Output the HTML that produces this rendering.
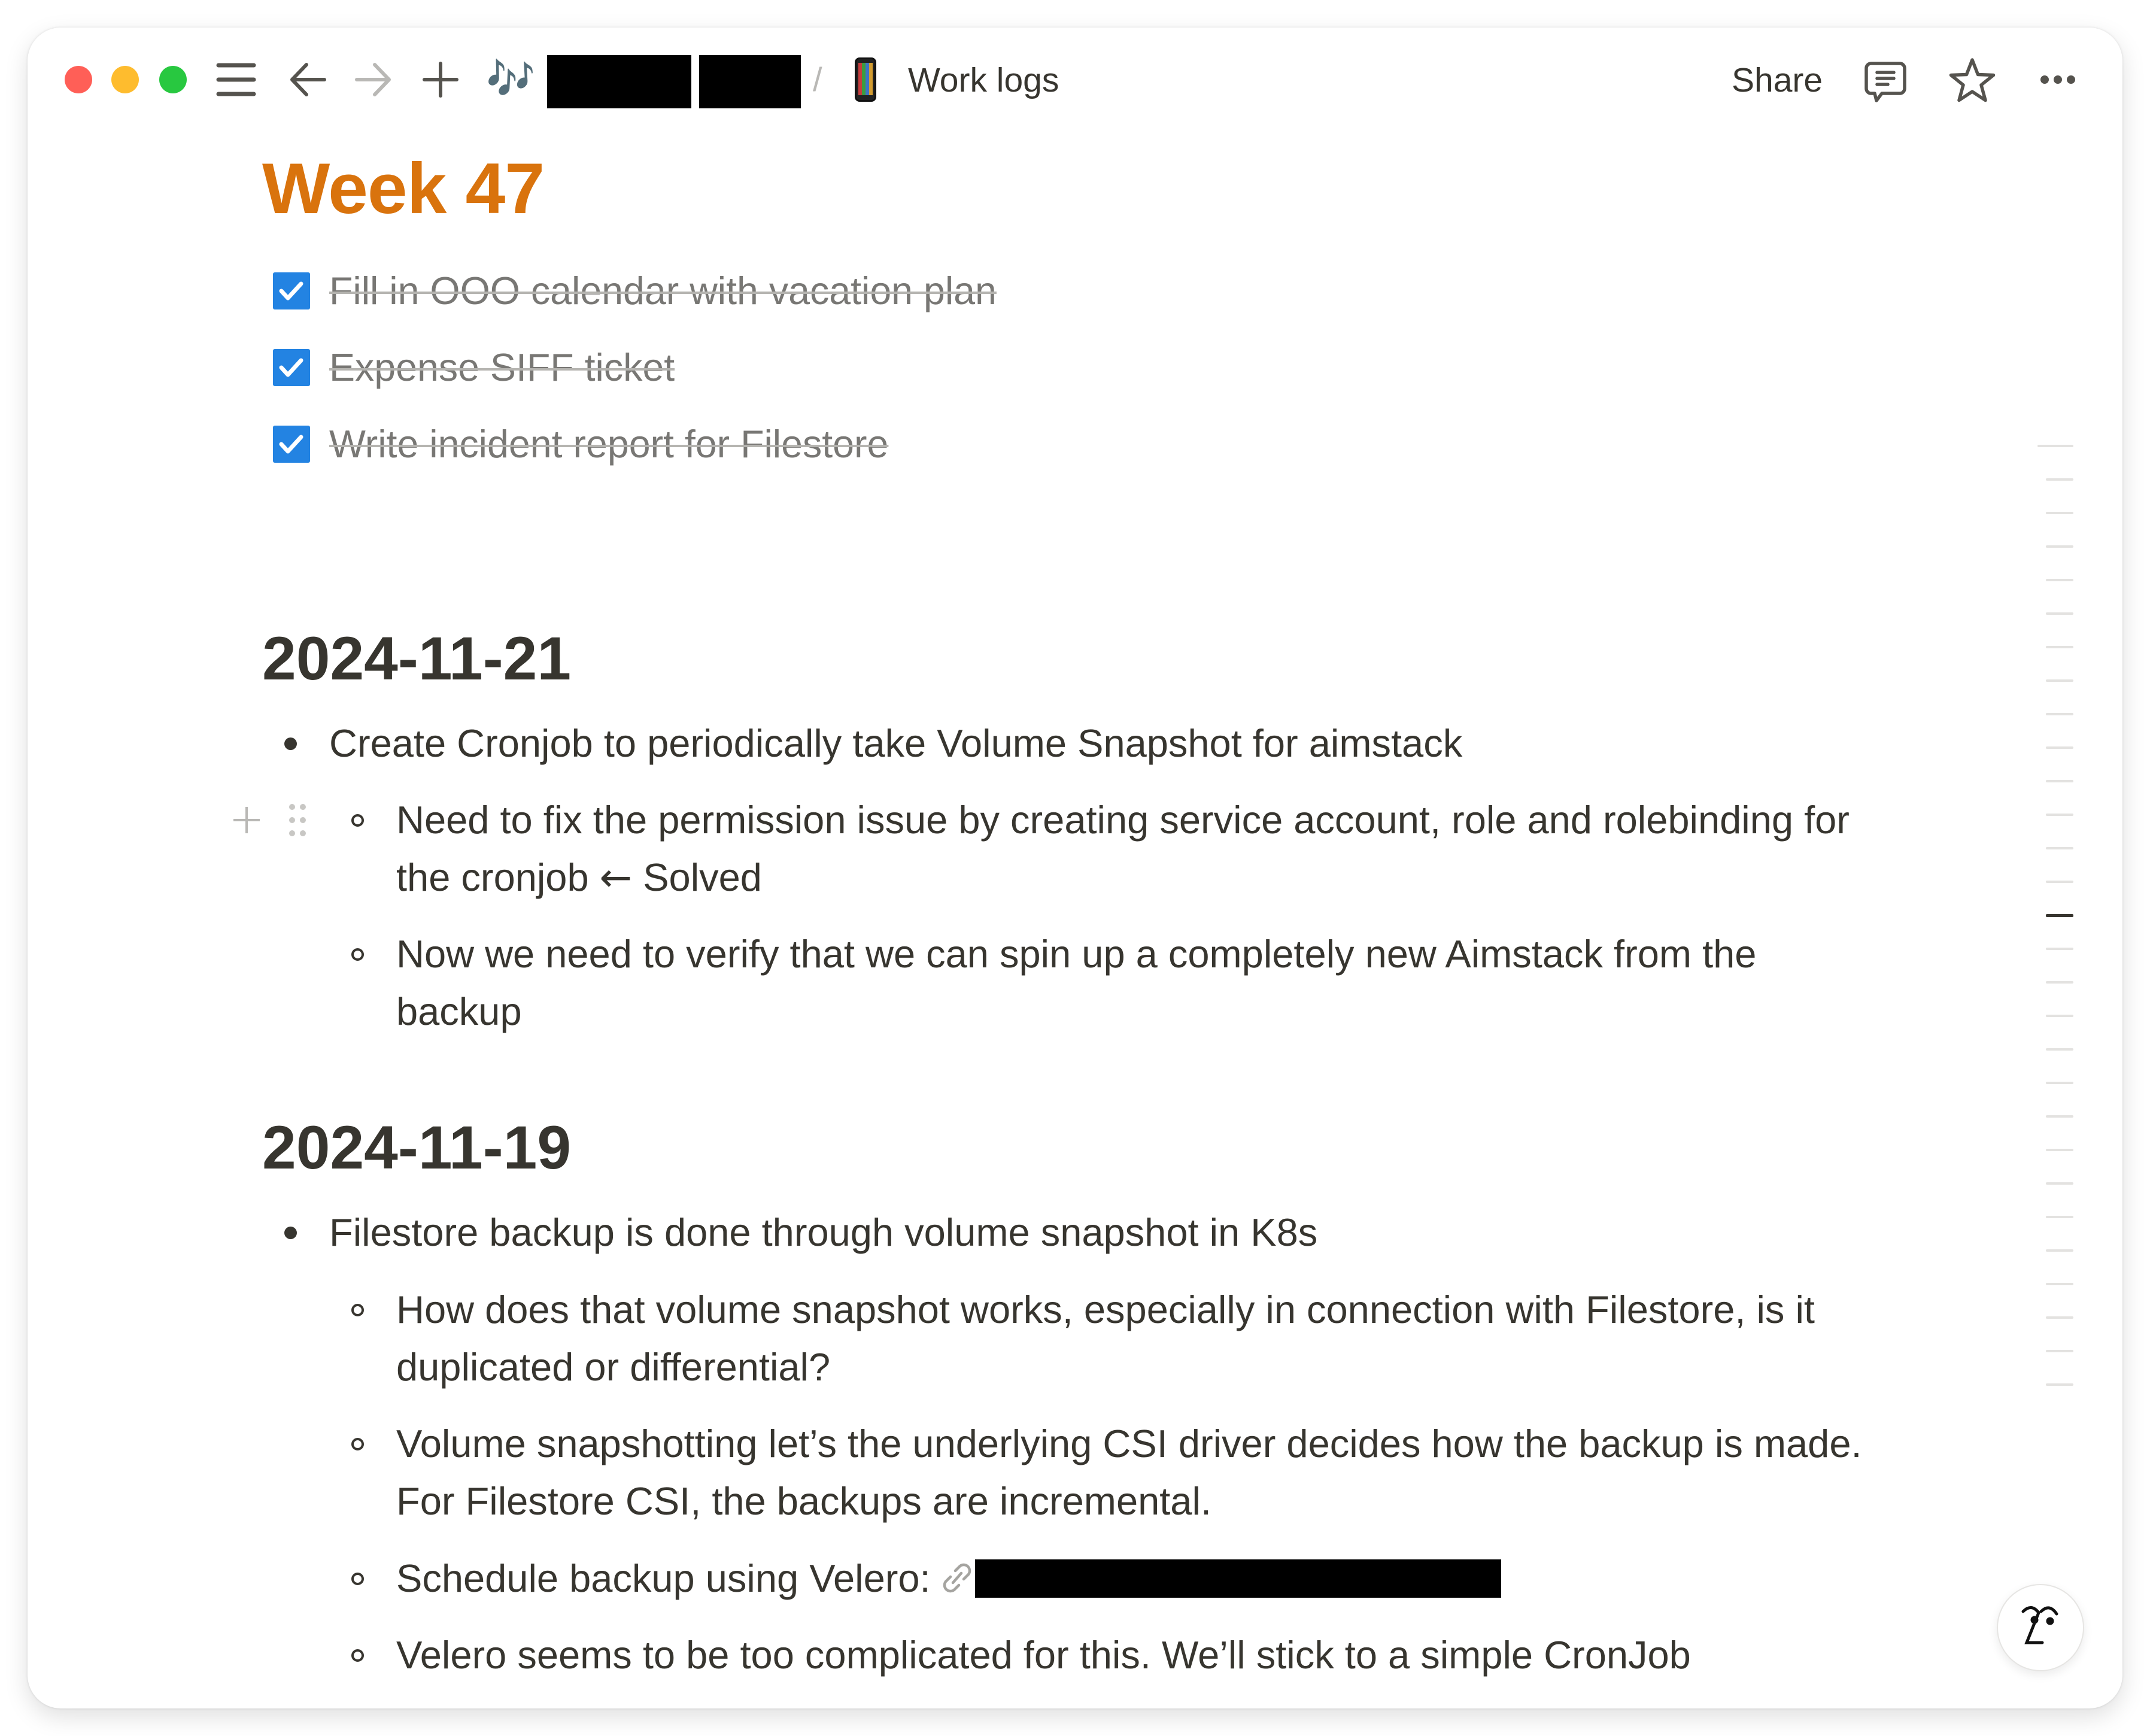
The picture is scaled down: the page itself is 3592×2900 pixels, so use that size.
<!DOCTYPE html>
<html><head><meta charset="utf-8"><style>
*{margin:0;padding:0;box-sizing:border-box}
html,body{width:3592px;height:2900px;background:#fff;overflow:hidden;font-family:"Liberation Sans",sans-serif;color:#37352F}
.win{position:absolute;left:46px;top:46px;width:3500px;height:2808px;border-radius:56px;background:#fff;box-shadow:0 0 4px rgba(0,0,0,.12),0 14px 40px rgba(0,0,0,.13);overflow:hidden}
.a{position:absolute;white-space:nowrap}
.t{font-size:65px;line-height:96px;height:96px}
.tl{position:absolute;top:110px;width:46px;height:46px;border-radius:50%}
.cb{position:absolute;left:456px;width:62px;height:62px;background:#2383E2;border-radius:3px}
.st{color:#787774;text-decoration:line-through;text-decoration-color:#b5b4b0;text-decoration-thickness:4px;font-size:64.5px}
.dot{position:absolute;left:475px;width:21px;height:21px;border-radius:50%;background:#37352F}
.cir{position:absolute;left:587px;width:21px;height:21px;border-radius:50%;border:4px solid #37352F}
.h2{font-size:102px;font-weight:bold;line-height:120px}
.dash{position:absolute;left:3418px;width:46px;height:4px;background:#e3e2e0;border-radius:2px}
.ar{font-family:"DejaVu Sans",sans-serif}
</style></head><body>
<div class="win"></div>
<div class="tl" style="left:108px;background:#FF5F57"></div>
<div class="tl" style="left:186px;background:#FEBC2E"></div>
<div class="tl" style="left:266px;background:#28C840"></div>
<svg class="a" style="left:360px;top:100px" width="70" height="66" viewBox="0 0 70 66" stroke="#55534e" stroke-width="7" stroke-linecap="round"><line x1="5" y1="9" x2="64" y2="9"/><line x1="5" y1="33" x2="64" y2="33"/><line x1="5" y1="57" x2="64" y2="57"/></svg>
<svg class="a" style="left:482px;top:102px" width="64" height="62" viewBox="0 0 64 62" fill="none" stroke="#55534e" stroke-width="6" stroke-linecap="round" stroke-linejoin="round"><path d="M60 31H6M30 6L6 31l24 25"/></svg>
<svg class="a" style="left:592px;top:102px" width="64" height="62" viewBox="0 0 64 62" fill="none" stroke="#b9b8b5" stroke-width="6" stroke-linecap="round" stroke-linejoin="round"><path d="M4 31h54M34 6l24 25-24 25"/></svg>
<svg class="a" style="left:705px;top:102px" width="62" height="62" viewBox="0 0 62 62" stroke="#55534e" stroke-width="6" stroke-linecap="round"><path d="M31 4v54M4 31h54"/></svg>
<div class="a" style="left:812px;top:92px;font-size:66px;line-height:80px;font-family:'DejaVu Sans',sans-serif;color:#222">🎶</div>
<div class="a" style="left:914px;top:92px;width:241px;height:89px;background:#000"></div>
<div class="a" style="left:1168px;top:92px;width:170px;height:89px;background:#000"></div>
<div class="a" style="left:1358px;top:98px;font-size:56px;line-height:70px;color:#b9b8b5">/</div>
<div class="a" style="left:1428px;top:96px;width:36px;height:74px;background:#222;border-radius:8px;border:3px solid #111"><div style="margin:6px 3px;height:54px;background:linear-gradient(90deg,#e44 0 25%,#4b4 25% 50%,#48e 50% 75%,#fb3 75%);opacity:.8"></div></div>
<div class="a" style="left:1517px;top:96px;font-size:57px;line-height:76px">Work logs</div>
<div class="a" style="left:2893px;top:96px;font-size:57px;line-height:76px">Share</div>
<svg class="a" style="left:3112px;top:100px" width="76" height="76" viewBox="0 0 76 76" fill="none" stroke="#55534e" stroke-width="5.5" stroke-linejoin="round" stroke-linecap="round"><path d="M14 6h48a8 8 0 0 1 8 8v34a8 8 0 0 1-8 8H32l-9 12-3-12h-6a8 8 0 0 1-8-8V14a8 8 0 0 1 8-8z"/><path d="M24 21h28M24 31h28M24 41h18"/></svg>
<svg class="a" style="left:3256px;top:96px" width="78" height="76" viewBox="0 0 78 76" fill="none" stroke="#55534e" stroke-width="5.5" stroke-linejoin="round"><path d="M39 4l9.5 24.5 26 1-20.5 16.5 7 25.5L39 57 17 71.5l7-25.5L3.5 29.5l26-1z"/></svg>
<svg class="a" style="left:3408px;top:118px" width="60" height="30" viewBox="0 0 60 30" fill="#55534e"><circle cx="8" cy="15" r="7"/><circle cx="30" cy="15" r="7"/><circle cx="52" cy="15" r="7"/></svg>

<div class="a" style="left:438px;top:240px;font-size:120px;font-weight:bold;color:#D9730D;line-height:150px;letter-spacing:-1px">Week 47</div>

<div class="cb" style="top:455px"></div><svg class="a" style="left:456px;top:455px" width="62" height="62" viewBox="0 0 62 62" fill="none" stroke="#fff" stroke-width="7" stroke-linecap="round" stroke-linejoin="round"><path d="M14 31l11 12 22-24"/></svg>
<div class="a t st" style="left:550px;top:438px">Fill in OOO calendar with vacation plan</div>
<div class="cb" style="top:583px"></div><svg class="a" style="left:456px;top:583px" width="62" height="62" viewBox="0 0 62 62" fill="none" stroke="#fff" stroke-width="7" stroke-linecap="round" stroke-linejoin="round"><path d="M14 31l11 12 22-24"/></svg>
<div class="a t st" style="left:550px;top:566px">Expense SIFF ticket</div>
<div class="cb" style="top:711px"></div><svg class="a" style="left:456px;top:711px" width="62" height="62" viewBox="0 0 62 62" fill="none" stroke="#fff" stroke-width="7" stroke-linecap="round" stroke-linejoin="round"><path d="M14 31l11 12 22-24"/></svg>
<div class="a t st" style="left:550px;top:694px">Write incident report for Filestore</div>

<div class="a h2" style="left:438px;top:1040px">2024-11-21</div>
<div class="dot" style="top:1232px"></div>
<div class="a t" style="left:550px;top:1194px">Create Cronjob to periodically take Volume Snapshot for aimstack</div>
<svg class="a" style="left:386px;top:1344px" width="52" height="52" viewBox="0 0 52 52" stroke="#b9b8b5" stroke-width="4"><path d="M26 4v44M4 26h44"/></svg>
<svg class="a" style="left:480px;top:1340px" width="34" height="60" viewBox="0 0 34 60" fill="#c8c7c4"><circle cx="8" cy="8" r="5"/><circle cx="26" cy="8" r="5"/><circle cx="8" cy="30" r="5"/><circle cx="26" cy="30" r="5"/><circle cx="8" cy="52" r="5"/><circle cx="26" cy="52" r="5"/></svg>
<div class="cir" style="top:1360px"></div>
<div class="a t" style="left:662px;top:1322px;height:auto">Need to fix the permission issue by creating service account, role and rolebinding for<br>the cronjob <span class="ar">←</span> Solved</div>
<div class="cir" style="top:1584px"></div>
<div class="a t" style="left:662px;top:1546px;height:auto">Now we need to verify that we can spin up a completely new Aimstack from the<br>backup</div>

<div class="a h2" style="left:438px;top:1857px">2024-11-19</div>
<div class="dot" style="top:2049px"></div>
<div class="a t" style="left:550px;top:2011px">Filestore backup is done through volume snapshot in K8s</div>
<div class="cir" style="top:2178px"></div>
<div class="a t" style="left:662px;top:2140px;height:auto">How does that volume snapshot works, especially in connection with Filestore, is it<br>duplicated or differential?</div>
<div class="cir" style="top:2402px"></div>
<div class="a t" style="left:662px;top:2364px;height:auto">Volume snapshotting let’s the underlying CSI driver decides how the backup is made.<br>For Filestore CSI, the backups are incremental.</div>
<div class="cir" style="top:2627px"></div>
<div class="a t" style="left:662px;top:2589px">Schedule backup using Velero:</div>
<svg class="a" style="left:1570px;top:2606px" width="58" height="60" viewBox="0 0 58 60" fill="none" stroke="#a5a4a0" stroke-width="4.5" stroke-linecap="round"><path d="M26 18l8-8a10 10 0 0 1 14 14l-8 8M32 42l-8 8a10 10 0 0 1-14-14l8-8M22 38l14-16"/></svg>
<div class="a" style="left:1629px;top:2605px;width:879px;height:64px;background:#000"></div>
<div class="cir" style="top:2755px"></div>
<div class="a t" style="left:662px;top:2717px">Velero seems to be too complicated for this. We’ll stick to a simple CronJob</div>

<div class="dash" style="left:3404px;width:60px;top:743px"></div>
<div id="d"></div>
<script>
var h='';for(var i=1;i<29;i++){var y=743+i*56;h+='<div class="dash" style="top:'+y+'px'+(i==14?';background:#37352F;height:5px':'')+'"></div>';}document.getElementById('d').innerHTML=h;
</script>

<div class="a" style="left:3336px;top:2646px;width:146px;height:146px;border-radius:50%;background:#fff;border:2px solid #e6e5e3;box-shadow:0 6px 16px rgba(0,0,0,.08)"></div>
<svg class="a" style="left:3370px;top:2670px" width="80" height="100" viewBox="0 0 80 100" fill="none" stroke="#111" stroke-width="5" stroke-linecap="round"><path d="M10 22q14-14 26 2M40 22q14-14 26 4M36 24L16 74h26"/><circle cx="29" cy="36" r="4" fill="#111"/><circle cx="55" cy="38" r="4" fill="#111"/></svg>
</body></html>
